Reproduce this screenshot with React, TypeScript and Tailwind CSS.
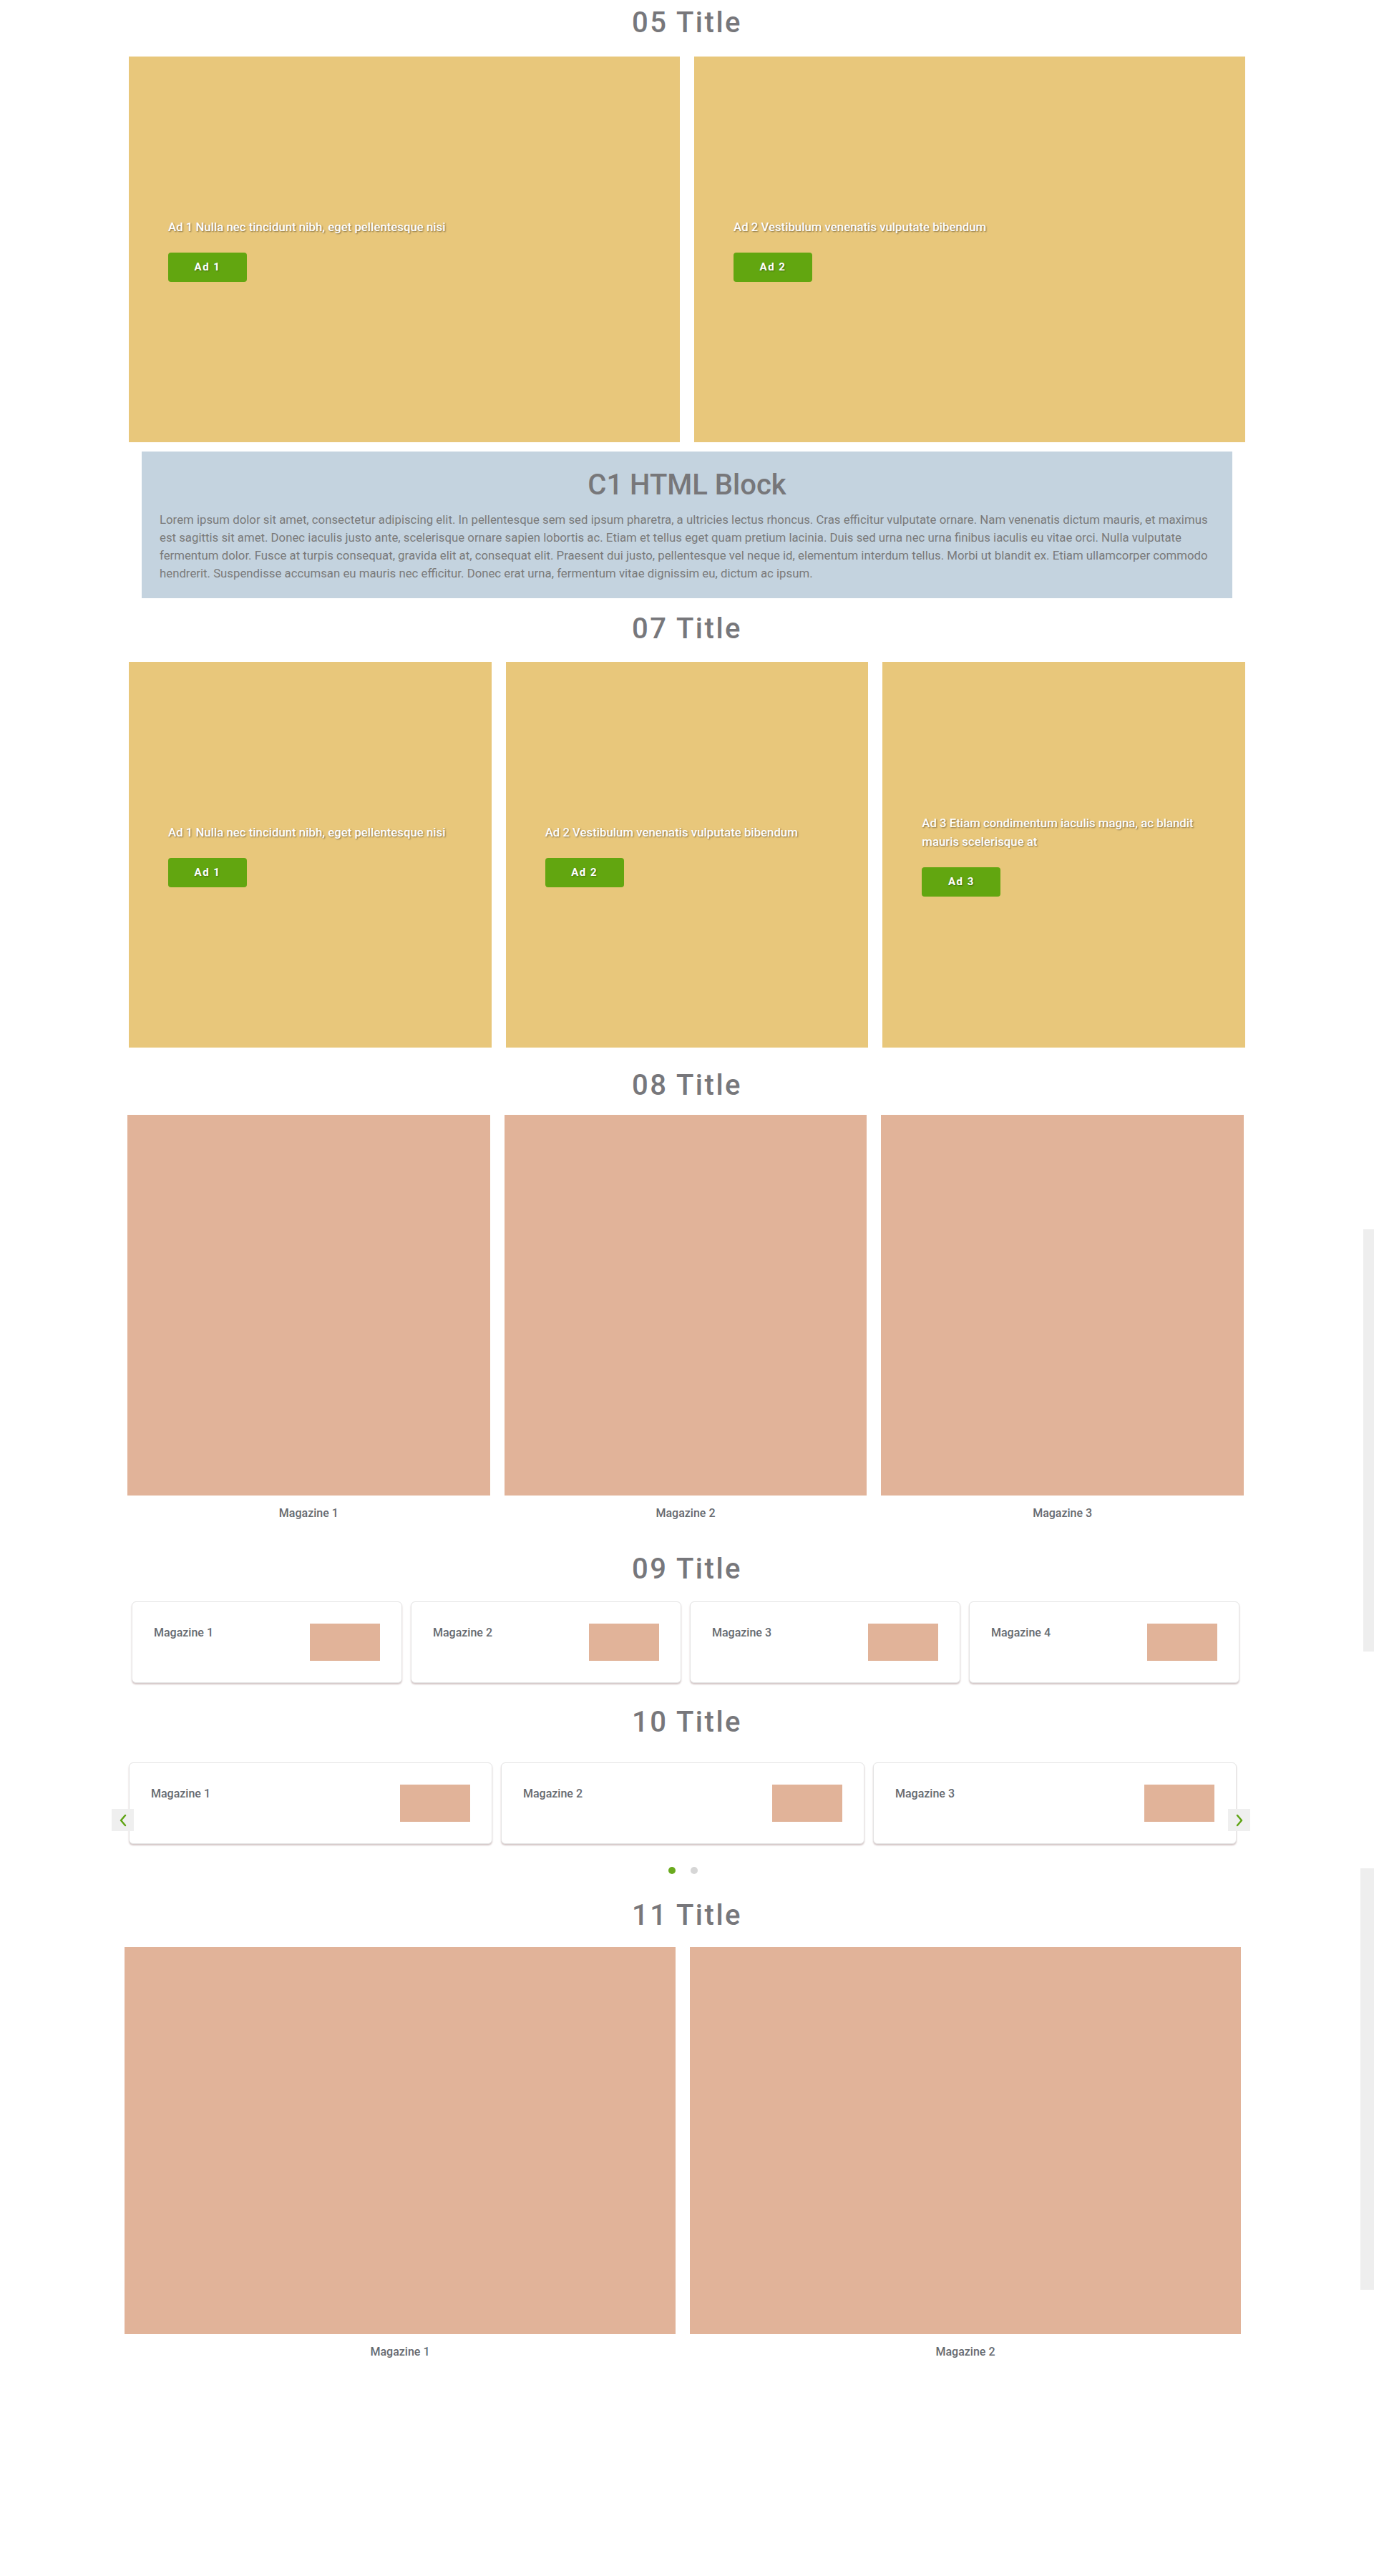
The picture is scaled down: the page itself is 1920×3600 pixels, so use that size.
import { ReactNode } from 'react'

const ADS_TWO = [
  { label: 'Ad 1', text: 'Ad 1 Nulla nec tincidunt nibh, eget pellentesque nisi' },
  { label: 'Ad 2', text: 'Ad 2 Vestibulum venenatis vulputate bibendum' },
]

const ADS_THREE = [
  ...ADS_TWO,
  { label: 'Ad 3', text: 'Ad 3 Etiam condimentum iaculis magna, ac blandit mauris scelerisque at' },
]

const LOREM =
  'Lorem ipsum dolor sit amet, consectetur adipiscing elit. In pellentesque sem sed ipsum pharetra, a ultricies lectus rhoncus. Cras efficitur vulputate ornare. Nam venenatis dictum mauris, et maximus est sagittis sit amet. Donec iaculis justo ante, scelerisque ornare sapien lobortis ac. Etiam et tellus eget quam pretium lacinia. Duis sed urna nec urna finibus iaculis eu vitae orci. Nulla vulputate fermentum dolor. Fusce at turpis consequat, gravida elit at, consequat elit. Praesent dui justo, pellentesque vel neque id, elementum interdum tellus. Morbi ut blandit ex. Etiam ullamcorper commodo hendrerit. Suspendisse accumsan eu mauris nec efficitur. Donec erat urna, fermentum vitae dignissim eu, dictum ac ipsum.'

function Title({ children, className = '' }: { children: ReactNode; className?: string }) {
  return (
    <h2 className={`h-12 text-center text-[40px] leading-[48px] font-medium tracking-[2.5px] text-[#77777b] ${className}`}>
      {children}
    </h2>
  )
}

function AdCard({ label, text }: { label: string; text: string }) {
  return (
    <div className="flex h-[539px] flex-col justify-center bg-[#e8c77b] px-[55px]">
      <p className="text-[16.8px] leading-[26px] font-medium text-white [text-shadow:1px_1px_2px_rgba(0,0,0,0.45)]">
        {text}
      </p>
      <div className="mt-[23px] flex h-[41px] w-[110px] items-center justify-center rounded bg-[#62a610] text-[15px] font-bold tracking-[1.5px] text-white [text-shadow:1px_1px_2px_rgba(0,0,0,0.35)]">
        {label}
      </div>
    </div>
  )
}

function MagTile({ name, height }: { name: string; height: string }) {
  return (
    <div>
      <div className={`bg-[#e1b399] ${height}`} />
      <p className="mt-[15px] text-center text-[16px] leading-5 font-medium text-[#666a70]">{name}</p>
    </div>
  )
}

function MagCard({ name }: { name: string }) {
  return (
    <div className="flex items-start justify-between rounded-md border border-[#e4e4e4] bg-white p-[30px] shadow-[0_2px_2px_rgba(160,130,130,0.45)]">
      <p className="text-[16px] leading-[26px] font-medium text-[#666a70]">{name}</p>
      <div className="h-[52px] w-[98px] bg-[#e1b399]" />
    </div>
  )
}

function Arrow({ dir }: { dir: 'left' | 'right' }) {
  return (
    <div
      className={`absolute top-[65px] flex h-[31px] w-[31px] items-center justify-center bg-[#efefef] ${
        dir === 'left' ? '-left-[18px]' : '-right-[13px]'
      }`}
    >
      <svg width="12" height="18" viewBox="0 0 12 18" fill="none">
        <polyline
          points={dir === 'left' ? '9,2 3,9 9,16' : '3,2 9,9 3,16'}
          stroke="#5ea312"
          strokeWidth="2.4"
          strokeLinecap="round"
          strokeLinejoin="round"
        />
      </svg>
    </div>
  )
}

export default function App() {
  return (
    <div className="relative min-h-[3600px] bg-white font-['Roboto',sans-serif]">
      {/* 05 */}
      <section className="pt-2">
        <Title>05 Title</Title>
        <div className="mx-auto mt-[23px] grid w-[1560px] grid-cols-2 gap-5">
          {ADS_TWO.map((ad) => (
            <AdCard key={ad.label} {...ad} />
          ))}
        </div>
      </section>

      {/* C1 HTML block */}
      <section className="mx-auto mt-[13px] w-[1524px] bg-[#c4d3df] px-[25px] pt-[23px] pb-[22px]">
        <h3 className="text-center text-[40px] leading-[48px] font-medium text-[#77777a]">C1 HTML Block</h3>
        <p className="mt-3 text-[16.8px] leading-[25px] text-[#7a7a7a]">{LOREM}</p>
      </section>

      {/* 07 */}
      <section className="mt-[19px]">
        <Title>07 Title</Title>
        <div className="mx-auto mt-[22px] grid w-[1560px] grid-cols-3 gap-5">
          {ADS_THREE.map((ad) => (
            <AdCard key={ad.label} {...ad} />
          ))}
        </div>
      </section>

      {/* 08 */}
      <section className="mt-[29px]">
        <Title>08 Title</Title>
        <div className="mt-[17px] ml-[178px] grid w-[1560px] grid-cols-3 gap-5">
          {['Magazine 1', 'Magazine 2', 'Magazine 3'].map((m) => (
            <MagTile key={m} name={m} height="h-[532px]" />
          ))}
        </div>
      </section>

      {/* 09 */}
      <section className="mt-[44px]">
        <Title>09 Title</Title>
        <div className="mt-[21px] ml-[178px] grid w-[1560px] grid-cols-4">
          {['Magazine 1', 'Magazine 2', 'Magazine 3', 'Magazine 4'].map((m) => (
            <div key={m} className="px-[6px]">
              <MagCard name={m} />
            </div>
          ))}
        </div>
      </section>

      {/* 10 */}
      <section className="mt-[31px]">
        <Title>10 Title</Title>
        <div className="relative mt-8 ml-[174px] w-[1560px]">
          <div className="grid grid-cols-3">
            {['Magazine 1', 'Magazine 2', 'Magazine 3'].map((m) => (
              <div key={m} className="px-[6px]">
                <MagCard name={m} />
              </div>
            ))}
          </div>
          <Arrow dir="left" />
          <Arrow dir="right" />
          <div className="mt-8 flex justify-center gap-[21px]">
            <span className="h-[10px] w-[10px] rounded-full bg-[#6aaa1e]" />
            <span className="h-[10px] w-[10px] rounded-full bg-[#d6d6d6]" />
          </div>
        </div>
      </section>

      {/* 11 */}
      <section className="mt-[34px]">
        <Title>11 Title</Title>
        <div className="mt-5 ml-[174px] grid w-[1560px] grid-cols-2 gap-5">
          {['Magazine 1', 'Magazine 2'].map((m) => (
            <MagTile key={m} name={m} height="h-[541px]" />
          ))}
        </div>
      </section>

      {/* stray slides leaking past the right edge */}
      <div className="absolute top-[1718px] right-0 h-[590px] w-[15px] bg-[#eeeeee]" />
      <div className="absolute top-[2611px] right-0 h-[589px] w-[19px] bg-[#eeeeee]" />
    </div>
  )
}
